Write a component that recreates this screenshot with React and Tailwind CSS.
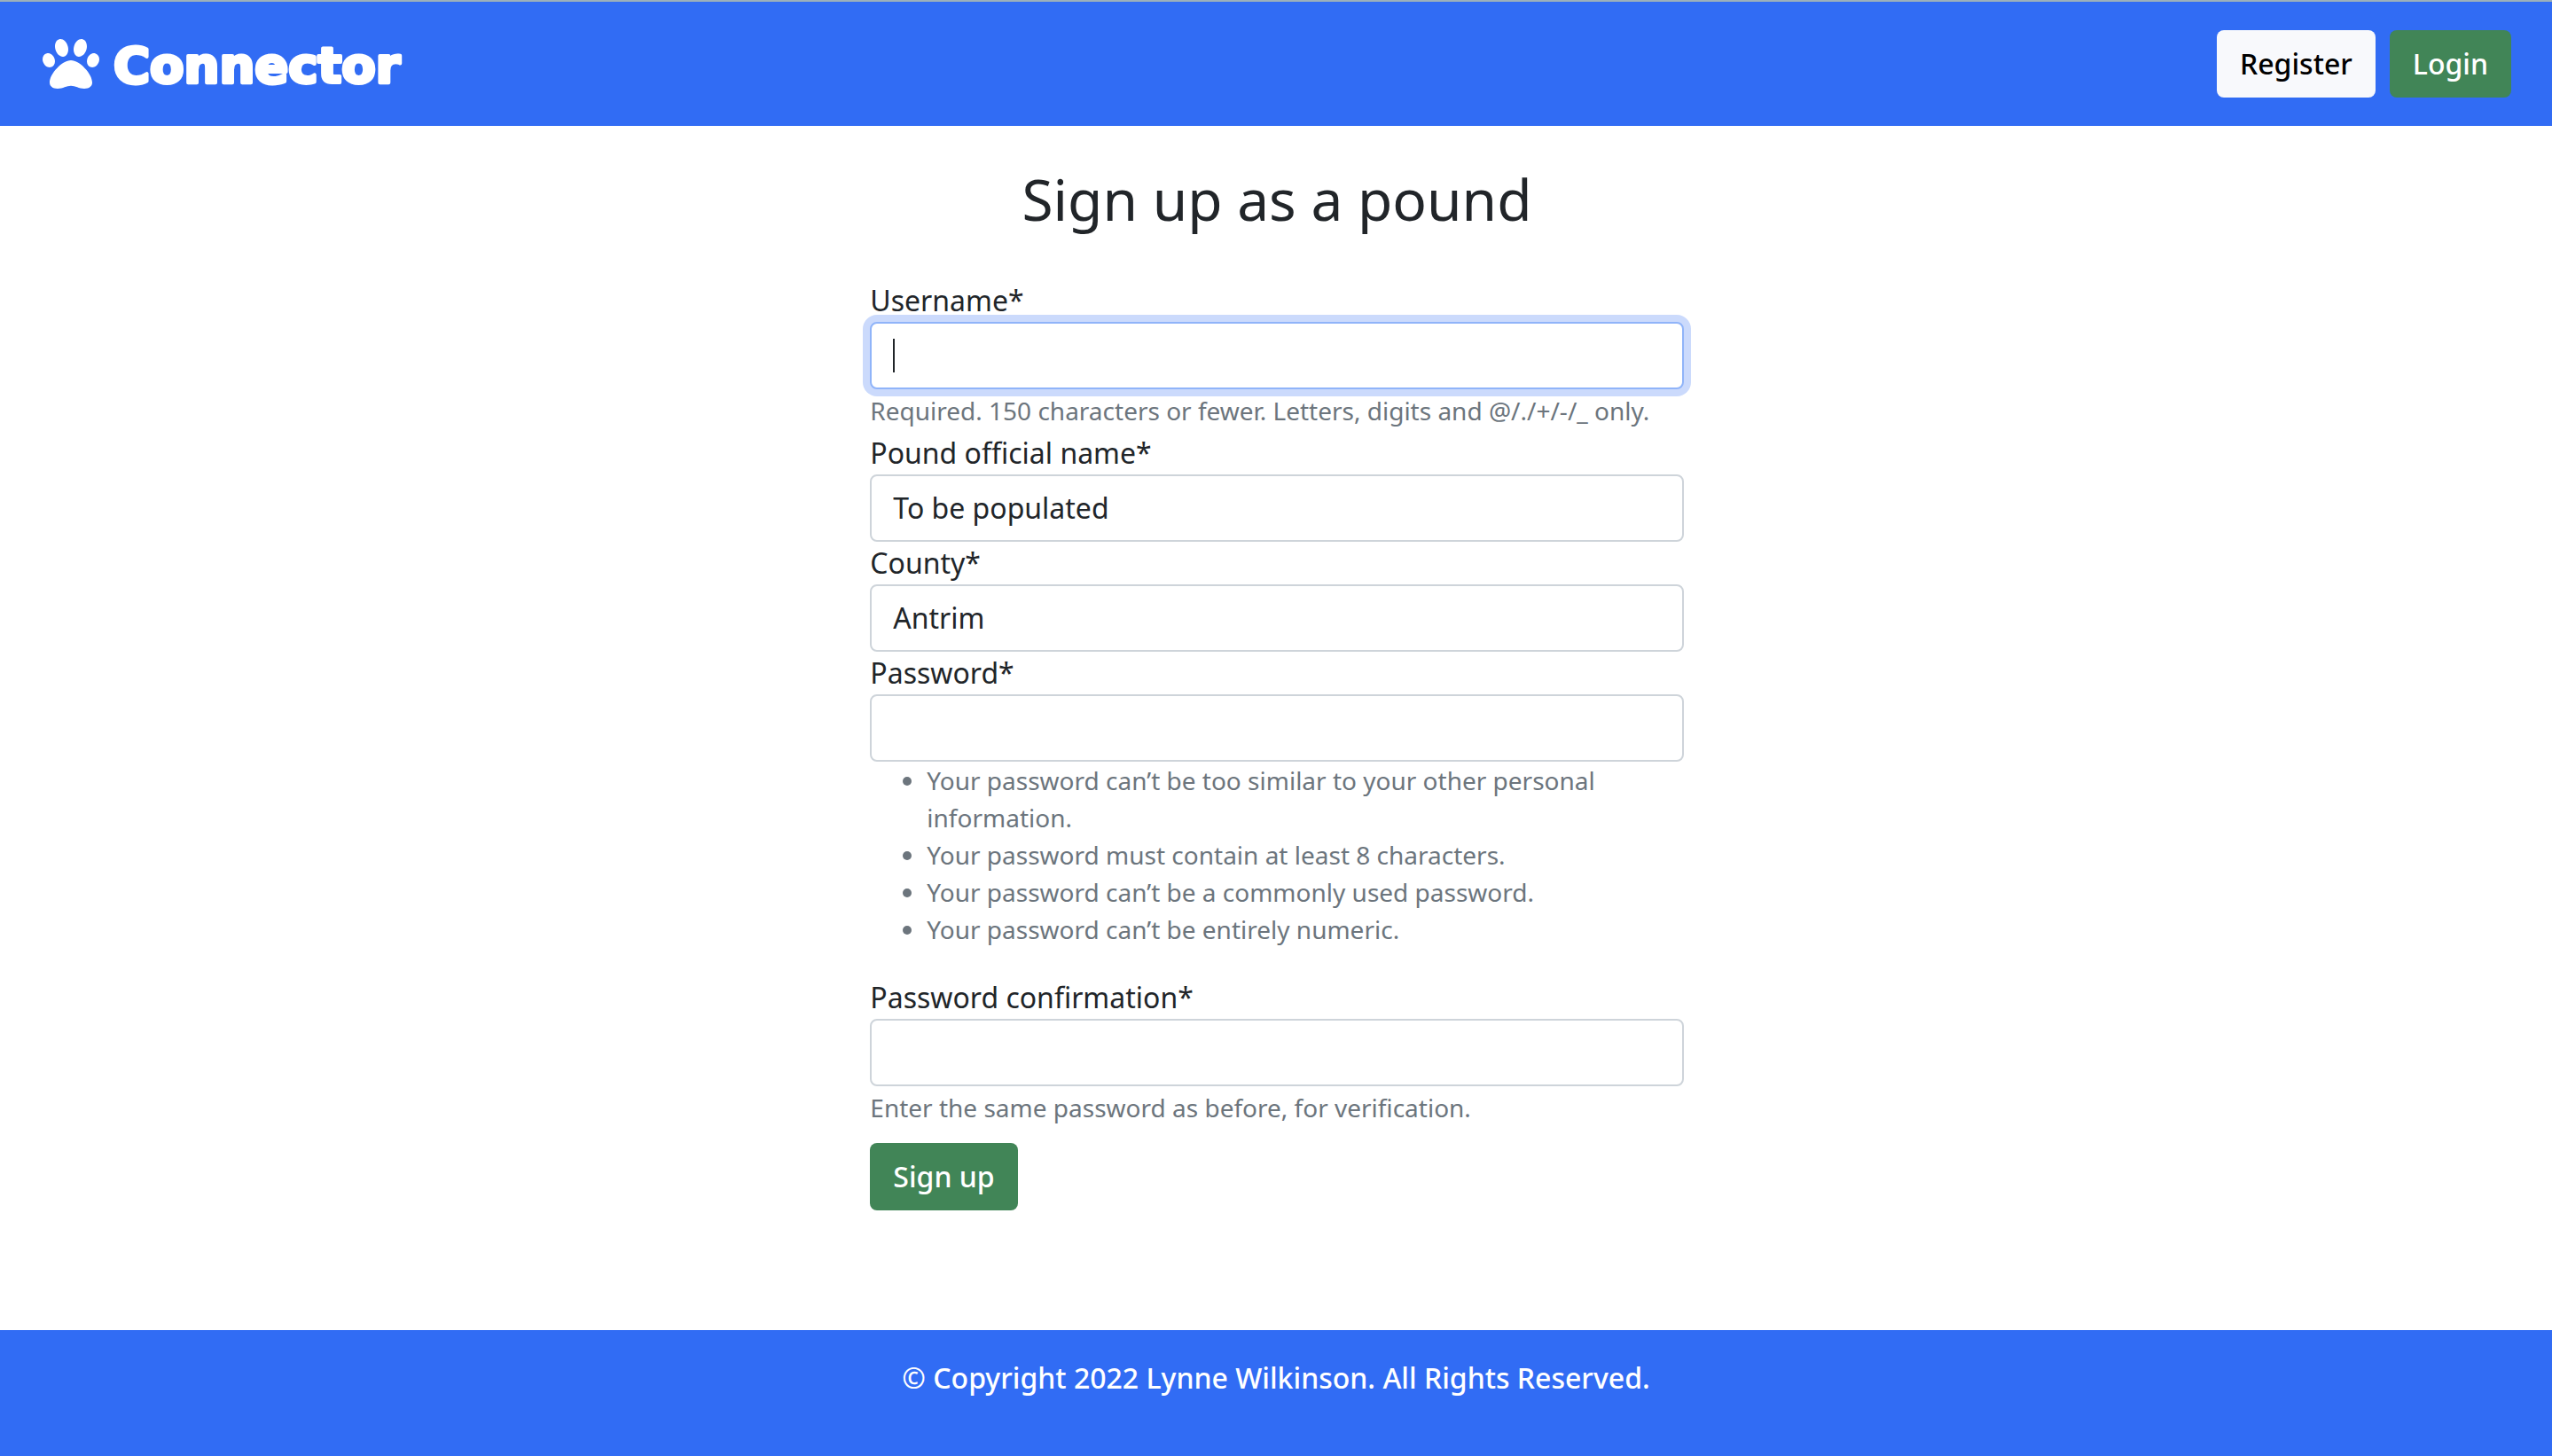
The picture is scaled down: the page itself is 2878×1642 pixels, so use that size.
import { FaPaw } from "react-icons/fa";

const control =
  "block w-full rounded-lg border-2 bg-white px-6 py-3 text-[32px] leading-[48px] text-[#212529] outline-none appearance-none";

function Field({ id, label, children }) {
  return (
    <div>
      <label htmlFor={id} className="block">
        {label}*
      </label>
      {children}
    </div>
  );
}

function Hint({ id, children }) {
  return (
    <p id={id} className="whitespace-nowrap text-[28px] leading-[48px] text-[#6c757d]">
      {children}
    </p>
  );
}

const passwordRules = [
  "Your password can’t be too similar to your other personal information.",
  "Your password must contain at least 8 characters.",
  "Your password can’t be a commonly used password.",
  "Your password can’t be entirely numeric.",
];

export default function App() {
  return (
    <div className="flex min-h-screen flex-col bg-white font-['Noto_Sans',sans-serif] text-[32px] leading-[48px] text-[#212529]">
      <header className="flex items-center justify-between border-t-2 border-[#9cb0ba] bg-[#316cf4] pr-[46px] pl-12 py-8">
        <a href="#home" aria-label="Connector" className="flex items-center gap-4 text-white">
          <FaPaw className="size-16" aria-hidden="true" />
          <svg width="340" height="76" viewBox="0 0 340 76" className="overflow-visible">
            <text
              x="0"
              y="59"
              fill="currentColor"
              stroke="currentColor"
              strokeWidth="4"
              strokeLinejoin="round"
              className="font-['DejaVu_Sans',sans-serif] text-[56px] font-bold"
            >
              Connector
            </text>
          </svg>
        </a>
        <nav className="flex gap-4 font-medium">
          <a href="#register" className="rounded-lg bg-[#f8f9fc] px-[26px] py-[14px] text-black">
            Register
          </a>
          <a href="#login" className="rounded-lg bg-[#418557] px-[26px] py-[14px] text-white">
            Login
          </a>
        </nav>
      </header>

      <main className="mx-auto w-1/3 grow pt-11 pr-5 pl-[22px]">
        <h1 className="text-center text-[64px] leading-[77px] whitespace-nowrap">Sign up as a pound</h1>
        <form className="mt-[52px]" onSubmit={(e) => e.preventDefault()}>
          <Field id="username" label="Username">
            <div className="relative">
              <input
                id="username"
                type="text"
                aria-describedby="username-hint"
                className={`${control} border-[#90b4f9] ring-8 ring-[#cbdafc]`}
              />
              <span className="pointer-events-none absolute top-[19px] left-[26px] h-[38px] w-0.5 bg-[#212529]" />
            </div>
            <Hint id="username-hint">
              Required. 150 characters or fewer. Letters, digits and @/./+/-/_ only.
            </Hint>
          </Field>
          <Field id="pound" label="Pound official name">
            <input id="pound" type="text" defaultValue="To be populated" className={`${control} border-[#ced4da]`} />
          </Field>
          <Field id="county" label="County">
            <select id="county" className={`${control} border-[#ced4da]`}>
              <option>Antrim</option>
            </select>
          </Field>
          <Field id="password" label="Password">
            <input
              id="password"
              type="password"
              aria-describedby="password-rules"
              className={`${control} border-[#ced4da]`}
            />
            <ul id="password-rules" className="mb-8 list-disc pl-16 text-[28px] leading-[42px] text-[#6c757d]">
              {passwordRules.map((rule) => (
                <li key={rule}>{rule}</li>
              ))}
            </ul>
          </Field>
          <Field id="confirm" label="Password confirmation">
            <input
              id="confirm"
              type="password"
              aria-describedby="confirm-hint"
              className={`${control} border-[#ced4da]`}
            />
            <Hint id="confirm-hint">Enter the same password as before, for verification.</Hint>
          </Field>
          <button type="submit" className="mt-4 rounded-lg bg-[#418557] px-[26px] py-[14px] font-medium text-white">
            Sign up
          </button>
        </form>
      </main>

      <footer className="bg-[#316cf4] pt-[30px] pb-16 text-center font-medium text-white">
        <p>© Copyright 2022 Lynne Wilkinson. All Rights Reserved.</p>
      </footer>
    </div>
  );
}
